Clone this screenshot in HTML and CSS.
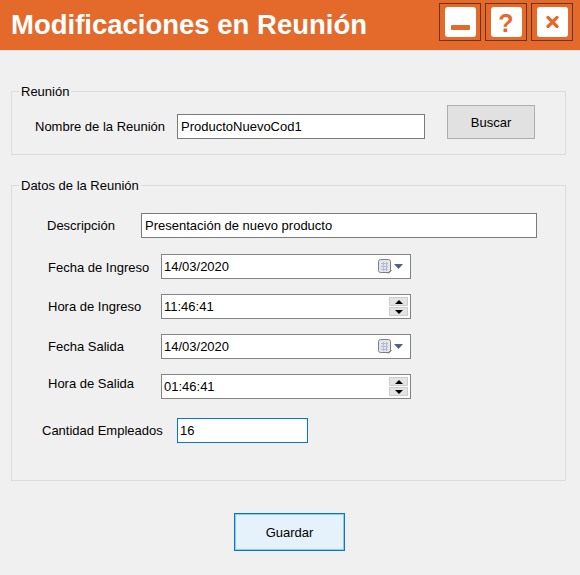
FILE: index.html
```html
<!DOCTYPE html>
<html lang="es">
<head>
<meta charset="utf-8">
<title>Modificaciones en Reunión</title>
<link rel="stylesheet" href="styles.css">
</head>
<body>
<header class="titlebar">
  <h1 class="title">Modificaciones en Reunión</h1>
  <div class="controls">
    <div class="ctl"><span class="ctl-face"><span class="minus"></span></span></div>
    <div class="ctl"><span class="ctl-face"><span class="help">?</span></span></div>
    <div class="ctl"><span class="ctl-face">
      <svg class="close" width="13" height="12" viewBox="0 0 13 12"><path d="M2 1.5L11 10.5M11 1.5L2 10.5" stroke="#e46a2c" stroke-width="3.2" stroke-linecap="round"/></svg>
    </span></div>
  </div>
</header>

<fieldset class="group group-reunion">
  <legend>Reunión</legend>
  <div class="row row-nombre">
    <label class="lbl lbl-nombre">Nombre de la Reunión</label>
    <div class="input w-nombre">ProductoNuevoCod1</div>
    <button class="btn btn-buscar">Buscar</button>
  </div>
</fieldset>

<fieldset class="group group-datos">
  <legend>Datos de la Reunión</legend>
  <div class="rows">
    <div class="row">
      <label class="lbl lbl-desc">Descripción</label>
      <div class="input w-desc">Presentación de nuevo producto</div>
    </div>
    <div class="row row-gap1">
      <label class="lbl lbl-date lbl-down">Fecha de Ingreso</label>
      <div class="input w-date date">
        <span class="val">14/03/2020</span>
        <svg class="cal" width="14" height="15" viewBox="0 0 14 15"><rect x="0.5" y="0.5" width="12" height="13" rx="2" fill="#e2e5ea" stroke="#7f7f7f"/><path d="M3 4.5h7M3 7.5h7M3 10.5h7M5.5 3v9M8.5 3v9" stroke="#b4bdcf" stroke-width="1"/><path d="M10 14.5L13.5 11" stroke="#666" stroke-width="1"/></svg>
        <svg class="arrow" width="9" height="5" viewBox="0 0 9 5"><path d="M0 0h9L4.5 5z" fill="#4b6390"/></svg>
      </div>
    </div>
    <div class="row">
      <label class="lbl lbl-date">Hora de Ingreso</label>
      <div class="input w-date time">
        <span class="val">11:46:41</span>
        <span class="spin"><span class="spin-btn"><i class="tri-up"></i></span><span class="spin-btn"><i class="tri-down"></i></span></span>
      </div>
    </div>
    <div class="row">
      <label class="lbl lbl-date">Fecha Salida</label>
      <div class="input w-date date">
        <span class="val">14/03/2020</span>
        <svg class="cal" width="14" height="15" viewBox="0 0 14 15"><rect x="0.5" y="0.5" width="12" height="13" rx="2" fill="#e2e5ea" stroke="#7f7f7f"/><path d="M3 4.5h7M3 7.5h7M3 10.5h7M5.5 3v9M8.5 3v9" stroke="#b4bdcf" stroke-width="1"/><path d="M10 14.5L13.5 11" stroke="#666" stroke-width="1"/></svg>
        <svg class="arrow" width="9" height="5" viewBox="0 0 9 5"><path d="M0 0h9L4.5 5z" fill="#4b6390"/></svg>
      </div>
    </div>
    <div class="row">
      <label class="lbl lbl-date lbl-up">Hora de Salida</label>
      <div class="input w-date time">
        <span class="val">01:46:41</span>
        <span class="spin"><span class="spin-btn"><i class="tri-up"></i></span><span class="spin-btn"><i class="tri-down"></i></span></span>
      </div>
    </div>
    <div class="row row-gap4">
      <label class="lbl lbl-cant">Cantidad Empleados</label>
      <div class="input w-cant focus">16</div>
    </div>
  </div>
</fieldset>

<div class="actions">
  <button class="btn btn-guardar">Guardar</button>
</div>
</body>
</html>
```

FILE: styles.css
```css
* { box-sizing: border-box; }
html, body { margin: 0; padding: 0; }
body {
  width: 580px;
  height: 575px;
  overflow: hidden;
  background: #f0f0f0;
  font-family: "Liberation Sans", Arial, sans-serif;
  font-size: 13px;
  color: #000;
}

/* Title bar */
.titlebar {
  height: 51px;
  background: #e46a2c;
  border-bottom: 1px solid #e2e2e2;
  display: flex;
  align-items: flex-start;
}
.title {
  margin: 0;
  flex: 1;
  padding: 10px 0 0 11px;
  font-size: 27.5px;
  line-height: 30px;
  font-weight: bold;
  color: #fff;
  white-space: nowrap;
}
.controls {
  display: flex;
  gap: 4px;
  margin: 3px 7px 0 0;
}
.ctl {
  width: 42px;
  height: 38px;
  border: 1px solid #6b3414;
  display: flex;
  align-items: center;
  justify-content: center;
}
.ctl-face {
  width: 31px;
  height: 30px;
  background: #fff;
  border-radius: 3px;
  display: flex;
  align-items: center;
  justify-content: center;
}
.minus {
  width: 19px;
  height: 5px;
  background: #e46a2c;
  border-radius: 1px;
  margin-top: 11px;
}
.help {
  color: #e46a2c;
  font-size: 25px;
  line-height: 25px;
  font-weight: bold;
  margin-top: 3px;
}
.close { display: block; }

/* Group boxes */
.group {
  margin: 0 14px 0 11px;
  padding: 0;
  border: 1px solid #dcdcdc;
  min-width: 0;
}
.group legend {
  margin-left: 7px;
  padding: 0 2px;
  height: 15px;
  line-height: 15px;
  font-size: 13px;
}
.group-reunion {
  margin-top: 33px;
  padding: 6px 0 15px;
}
.group-datos {
  margin-top: 23px;
  padding: 20px 0 37px;
}

.row {
  display: flex;
  align-items: center;
  height: 25px;
}
.row-nombre {
  align-items: flex-start;
  padding-left: 23px;
  height: auto;
}
.rows {
  display: flex;
  flex-direction: column;
  gap: 15px;
}
.row-gap1 { margin-top: 1px; }
.row-gap4 { margin-top: 4px; }

.lbl {
  white-space: nowrap;
  line-height: 25px;
  flex: none;
}
.lbl-nombre { width: 142px; margin-top: 9px; }
.lbl-desc { width: 94px; margin-left: 35px; }
.lbl-date { width: 113px; margin-left: 36px; }
.lbl-cant { width: 135px; margin-left: 30px; }
.lbl-up { line-height: 19px; align-self: flex-start; }
.lbl-down { line-height: 28px; align-self: flex-start; height: 25px; }

.input {
  height: 25px;
  background: #fff;
  border: 1px solid #7a7a7a;
  line-height: 23px;
  padding: 0 3px;
  white-space: nowrap;
  flex: none;
}
.w-nombre { width: 248px; margin-top: 9px; }
.w-desc { width: 396px; }
.w-date {
  width: 250px;
  display: flex;
  align-items: center;
  padding: 0 7px 0 2px;
  border-color: #848484;
}
.w-cant { width: 131px; padding-left: 2px; }
.focus { border-color: #0078d7; }

.val { flex: 1; }
.cal { display: block; margin-right: 2px; }
.arrow { display: block; }
.time { padding-right: 2px; }
.spin {
  width: 19px;
  height: 19px;
  display: flex;
  flex-direction: column;
  gap: 1px;
}
.spin-btn {
  flex: 1;
  background: #e3e3e3;
  border: 1px solid #cdcdcd;
  display: flex;
  align-items: center;
  justify-content: center;
}
.tri-up, .tri-down {
  display: block;
  width: 0;
  height: 0;
  border-left: 4px solid transparent;
  border-right: 4px solid transparent;
}
.tri-up { border-bottom: 4px solid #000; }
.tri-down { border-top: 4px solid #000; }

/* Buttons */
.btn {
  font-family: "Liberation Sans", Arial, sans-serif;
  font-size: 13px;
  color: #000;
  padding: 0;
  flex: none;
}
.btn-buscar {
  width: 88px;
  height: 34px;
  margin-left: 22px;
  background: #e1e1e1;
  border: 1px solid #adadad;
}
.actions {
  margin-top: 32px;
  padding-left: 234px;
}
.btn-guardar {
  width: 111px;
  height: 38px;
  background: #e5f1fb;
  border: 1px solid #0078d7;
  box-shadow: inset 0 0 0 1px rgba(0, 120, 215, 0.35);
}
```
